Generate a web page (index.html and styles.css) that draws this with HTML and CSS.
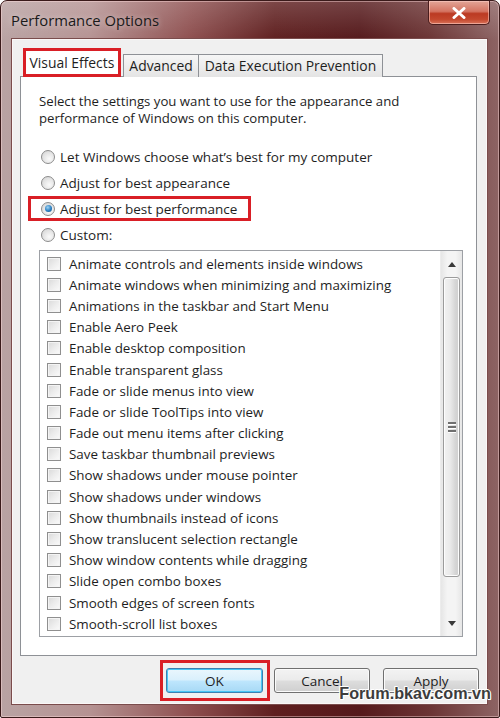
FILE: index.html
```html
<!DOCTYPE html>
<html>
<head>
<meta charset="utf-8">
<link rel="stylesheet" href="styles.css">
</head>
<body>
<div class="window">
  <div class="titlebar">
    <span class="title">Performance Options</span>
    <span class="close"><svg width="16" height="12" viewBox="0 0 16 12"><path d="M3 1.5 L13 10.5 M13 1.5 L3 10.5" stroke="#fff" stroke-width="3" stroke-linecap="round"/></svg></span>
  </div>
  <div class="client">
    <div class="tabs">
      <span class="tab selected">Visual Effects</span>
      <span class="tab">Advanced</span>
      <span class="tab">Data Execution Prevention</span>
    </div>
    <div class="panel">
      <p class="intro">Select the settings you want to use for the appearance and<br>performance of Windows on this computer.</p>
      <div class="radios">
        <div class="rrow"><span class="radio"></span><span>Let Windows choose what’s best for my computer</span></div>
        <div class="rrow"><span class="radio"></span><span>Adjust for best appearance</span></div>
        <div class="rrow marked"><span class="radio on"></span><span>Adjust for best performance</span></div>
        <div class="rrow"><span class="radio"></span><span>Custom:</span></div>
      </div>
      <div class="listbox">
        <ul class="items">
          <li><span class="cb"></span>Animate controls and elements inside windows</li>
          <li><span class="cb"></span>Animate windows when minimizing and maximizing</li>
          <li><span class="cb"></span>Animations in the taskbar and Start Menu</li>
          <li><span class="cb"></span>Enable Aero Peek</li>
          <li><span class="cb"></span>Enable desktop composition</li>
          <li><span class="cb"></span>Enable transparent glass</li>
          <li><span class="cb"></span>Fade or slide menus into view</li>
          <li><span class="cb"></span>Fade or slide ToolTips into view</li>
          <li><span class="cb"></span>Fade out menu items after clicking</li>
          <li><span class="cb"></span>Save taskbar thumbnail previews</li>
          <li><span class="cb"></span>Show shadows under mouse pointer</li>
          <li><span class="cb"></span>Show shadows under windows</li>
          <li><span class="cb"></span>Show thumbnails instead of icons</li>
          <li><span class="cb"></span>Show translucent selection rectangle</li>
          <li><span class="cb"></span>Show window contents while dragging</li>
          <li><span class="cb"></span>Slide open combo boxes</li>
          <li><span class="cb"></span>Smooth edges of screen fonts</li>
          <li><span class="cb"></span>Smooth-scroll list boxes</li>
        </ul>
        <div class="scrollbar">
          <div class="arrow"><svg width="8" height="5" viewBox="0 0 8 5"><path d="M0 5 L4 0 L8 5 Z" fill="#3a3a3a"/></svg></div>
          <div class="track">
            <div class="thumb"><span class="grip"></span><span class="grip"></span><span class="grip"></span></div>
          </div>
          <div class="arrow"><svg width="8" height="5" viewBox="0 0 8 5"><path d="M0 0 L4 5 L8 0 Z" fill="#3a3a3a"/></svg></div>
        </div>
      </div>
    </div>
    <div class="buttons">
      <span class="okmark"><button class="btn default">OK</button></span>
      <button class="btn cancel">Cancel</button>
      <button class="btn">Apply</button>
    </div>
  </div>
  <div class="watermark">Forum.bkav.com.vn</div>
</div>
</body>
</html>
```
FILE: styles.css
```css
* { box-sizing: border-box; }
html, body { margin: 0; padding: 0; background: #fff; }
body { font-family: "Open Sans", "Noto Sans", sans-serif; font-size: 13px; color: #1e1e1e; }

.window {
  position: relative;
  width: 500px;
  height: 718px;
  padding: 0 11px 12px 10px;
  display: flex;
  flex-direction: column;
  border-radius: 7px 7px 2px 2px;
  border: 1px solid #3a1a1a;
  background:
    linear-gradient(to bottom, rgba(255,255,255,0.18), rgba(255,255,255,0) 40px),
    linear-gradient(to right, #b9a3a3 0%, #b59292 18%, #8e4f4f 38%, #5f1f1f 55%, #55191b 72%, #6b3434 86%, #8d6464 100%);
  box-shadow: inset 0 0 0 1px rgba(255,220,220,0.45);
}
.titlebar {
  height: 37px;
  display: flex;
  align-items: flex-start;
}
.title {
  margin-top: 9px;
  font-size: 14.8px;
  color: #1a1a1a;
  text-shadow: 0 0 6px rgba(255,255,255,0.6);
}
.close {
  margin-left: auto;
  margin-right: -2px;
  width: 62px;
  height: 24px;
  display: flex;
  align-items: center;
  justify-content: center;
  border: 1px solid #4a1d1d;
  border-top: none;
  border-radius: 0 0 5px 5px;
  background: linear-gradient(to bottom, #e2a597 0%, #d47462 45%, #bb3a23 55%, #c4482e 80%, #d9735a 100%);
  box-shadow: inset 0 0 0 1px rgba(255,210,200,0.55);
}
.client {
  flex: 1;
  display: flex;
  flex-direction: column;
  background: #f0f0f0;
  border: 1px solid #7a4c4c;
  padding: 10px 10px 11px 8px;
  box-shadow: inset 0 0 0 1px #fbf7f7;
}
.tabs {
  display: flex;
  align-items: flex-end;
  height: 28px;
  padding-left: 3px;
  margin-bottom: -1px;
  position: relative;
  z-index: 1;
}
.tab {
  height: 23px;
  padding: 0 5.5px;
  line-height: 21px;
  border: 1px solid #8e9196;
  border-bottom: none;
  background: linear-gradient(to bottom, #f6f6f6, #e4e4e4);
  margin-left: -1px;
  white-space: nowrap;
  font-size: 13.9px;
}
.tab.selected {
  height: 29px;
  line-height: 27px;
  background: #fff;
  margin-left: 0;
  margin-right: 3px;
  padding: 0 5.5px;
  outline: 3px solid #d91f26;
  outline-offset: -3px;
}
.panel {
  flex: 1;
  background: #fff;
  border: 1px solid #8e9196;
  padding: 16px 16px 0 17px;
}
.intro {
  margin: 0 0 0 1px;
  line-height: 17px;
  font-size: 13.2px;
}
.radios {
  margin-top: 17px;
  display: flex;
  flex-direction: column;
  align-items: flex-start;
}
.rrow {
  height: 26px;
  display: flex;
  align-items: center;
  padding-left: 3px;
  font-size: 13.5px;
}
.rrow.marked {
  height: 25px;
  margin: 0 0 1px -10px;
  padding: 0 14px 0 13px;
  outline: 3px solid #d91f26;
  outline-offset: -3px;
}
.radio {
  width: 14px;
  height: 14px;
  border-radius: 50%;
  border: 1px solid #8c8c8c;
  background: radial-gradient(circle at 60% 65%, #fafafa 0%, #e8e8e8 45%, #cfcfcf 100%);
  margin-right: 5px;
  flex: none;
  display: flex;
  align-items: center;
  justify-content: center;
}
.radio.on::after {
  content: "";
  width: 7px;
  height: 7px;
  border-radius: 50%;
  background: radial-gradient(circle at 40% 35%, #9fd3f2 0%, #2b7fc2 55%, #15507e 100%);
}
.listbox {
  margin: 2px 0 0 1px;
  width: 424px;
  height: 387px;
  border: 1px solid #9da0a5;
  display: flex;
}
.items {
  flex: 1;
  list-style: none;
  margin: 0;
  padding: 2px 0 0 7px;
}
.items li {
  height: 21.2px;
  display: flex;
  align-items: center;
  font-size: 13.4px;
  white-space: nowrap;
}
.cb {
  width: 14px;
  height: 14px;
  border: 1px solid #8f8f8f;
  background: linear-gradient(135deg, #d9d9d9 0%, #ececec 50%, #fbfbfb 100%);
  box-shadow: inset 0 0 0 1px #f4f4f4;
  margin-right: 8px;
  flex: none;
}
.scrollbar {
  width: 22px;
  display: flex;
  flex-direction: column;
  background: linear-gradient(to right, #e6e6e6, #f4f4f4 30%, #f4f4f4 70%, #e6e6e6);
  border-left: 1px solid #ececec;
}
.arrow {
  height: 26px;
  display: flex;
  align-items: center;
  justify-content: center;
}
.track {
  flex: 1;
  padding: 0 2px;
}
.thumb {
  height: 300px;
  border: 1px solid #9b9b9b;
  border-radius: 3px;
  background: linear-gradient(to right, #f2f2f2 0%, #eaeaea 40%, #d6d6d6 75%, #cfcfcf 100%);
  box-shadow: inset 0 0 0 1px #fdfdfd;
  display: flex;
  flex-direction: column;
  align-items: center;
  justify-content: center;
  gap: 2px;
}
.grip {
  width: 8px;
  height: 2px;
  background: #6f6f6f;
  box-shadow: 0 1px 0 #fff;
}
.buttons {
  display: flex;
  justify-content: flex-end;
  align-items: center;
  margin: 12px -2px 0 0;
  height: 25px;
}
.okmark {
  border: 3px solid #d91f26;
  padding: 5px 4px 5px 3px;
  margin: -8px 4px -8px 0;
  display: flex;
}
.btn {
  width: 96px;
  height: 25px;
  font-family: "Open Sans", "Noto Sans", sans-serif;
  font-size: 13.5px;
  color: #1e1e1e;
  border: 1px solid #707070;
  border-radius: 3px;
  background: linear-gradient(to bottom, #f3f3f3 0%, #ebebeb 48%, #dddddd 52%, #cfcfcf 100%);
  box-shadow: inset 0 0 0 1px #fbfbfb;
  padding: 0;
}
.btn.default {
  width: 97px;
  border-color: #3c7fb1;
  box-shadow: inset 0 0 0 1px #48c6f4;
  background: linear-gradient(to bottom, #eaf6fd 0%, #d9f0fc 48%, #bee6fd 52%, #a7d9f5 100%);
}
.btn.cancel { margin-right: 13px; }
.watermark {
  position: absolute;
  right: 8px;
  bottom: 14px;
  font-family: "Liberation Sans", Arial, sans-serif;
  font-weight: bold;
  font-size: 16.2px;
  color: #3c3c3c;
  text-shadow: 1px 0 0 #fff, -1px 0 0 #fff, 0 1px 0 #fff, 0 -1px 0 #fff, 1px 1px 0 #fff, -1px -1px 0 #fff;
}
```
